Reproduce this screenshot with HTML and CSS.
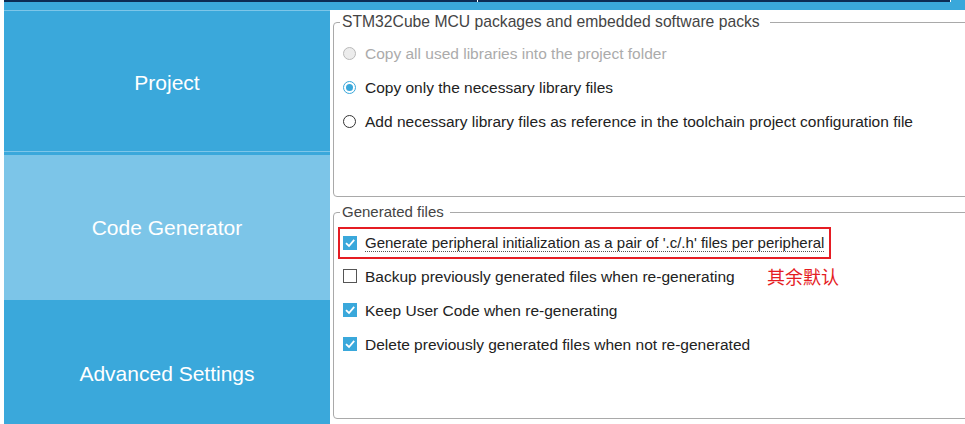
FILE: index.html
```html
<!DOCTYPE html>
<html>
<head>
<meta charset="utf-8">
<link rel="stylesheet" href="styles.css">
</head>
<body>
<div class="app">
  <div class="topbar">
    <div class="tabs"><span class="tab tab-a"></span><span class="tab tab-b"></span></div>
  </div>
  <div class="main">
    <nav class="sidebar">
      <div class="nav-item nav-first">Project</div>
      <div class="nav-item nav-active">Code Generator</div>
      <div class="nav-item nav-last">Advanced Settings</div>
    </nav>
    <section class="panel">
      <fieldset class="group group-packs">
        <legend class="legend-wide">STM32Cube MCU packages and embedded software packs</legend>
        <div class="row disabled"><span class="radio radio-disabled"></span><span class="label">Copy all used libraries into the project folder</span></div>
        <div class="row"><span class="radio radio-on"></span><span class="label">Copy only the necessary library files</span></div>
        <div class="row"><span class="radio"></span><span class="label">Add necessary library files as reference in the toolchain project configuration file</span></div>
      </fieldset>
      <fieldset class="group group-files">
        <legend>Generated files</legend>
        <div class="row row-marked"><span class="check check-on"><svg viewBox="0 0 14 14" width="14" height="14"><path d="M3 7.2 L6 10 L11.2 3.8" fill="none" stroke="#fff" stroke-width="1.8"/></svg></span><span class="label label-dotted">Generate peripheral initialization as a pair of '.c/.h' files per peripheral</span></div>
        <div class="row row-note"><span class="check"></span><span class="label">Backup previously generated files when re-generating</span><span class="note">其余默认</span></div>
        <div class="row"><span class="check check-on"><svg viewBox="0 0 14 14" width="14" height="14"><path d="M3 7.2 L6 10 L11.2 3.8" fill="none" stroke="#fff" stroke-width="1.8"/></svg></span><span class="label">Keep User Code when re-generating</span></div>
        <div class="row"><span class="check check-on"><svg viewBox="0 0 14 14" width="14" height="14"><path d="M3 7.2 L6 10 L11.2 3.8" fill="none" stroke="#fff" stroke-width="1.8"/></svg></span><span class="label">Delete previously generated files when not re-generated</span></div>
      </fieldset>
    </section>
  </div>
</div>
</body>
</html>
```
FILE: styles.css
```css
html, body {
  margin: 0;
  padding: 0;
  background: #fff;
  overflow: hidden;
}
.app {
  width: 961px;
  height: 424px;
  padding-left: 4px;
  overflow: hidden;
  font-family: "Liberation Sans", Arial, sans-serif;
}
.topbar {
  height: 10px;
  background: #3aa8db;
}
.tabs {
  display: flex;
  height: 2px;
}
.tab {
  display: block;
  height: 2px;
  background: #0c2c55;
  border-right: 1px solid #ffffff;
}
.tab-a { width: 473px; }
.tab-b { width: 472px; }
.main {
  display: flex;
  height: 414px;
}
.sidebar {
  width: 326px;
  flex: none;
  background: #3aa8db;
  display: flex;
  flex-direction: column;
}
.nav-item {
  flex: none;
  display: flex;
  align-items: center;
  justify-content: center;
  color: #fff;
  font-size: 21px;
  background: #3aa8db;
  box-sizing: border-box;
}
.nav-first {
  height: 142px;
  border-top: 1px solid #7dc6e9;
  border-bottom: 1px solid #7dc6e9;
  margin-bottom: 3px;
  padding-top: 4px;
}
.nav-active {
  background: #7cc5e8;
  height: 145px;
  padding-top: 1px;
}
.nav-last {
  height: 145px;
  padding-top: 2px;
}
.panel {
  flex: 1;
  min-width: 0;
  overflow: hidden;
  padding: 3px 0 0 3px;
}
.group {
  margin: 0;
  width: 700px;
  min-width: 0;
  border: 1px solid #a9a9a9;
  border-radius: 4px;
  padding: 5px 0 58px 6px;
  box-sizing: content-box;
}
.group-files {
  margin-top: 6px;
  padding-top: 4px;
  padding-bottom: 57px;
}
legend {
  padding: 0 6px 0 2px;
  font-size: 15px;
  line-height: 18px;
  color: #444;
}
.legend-wide {
  font-size: 15.7px;
  padding-right: 10px;
}
.row {
  height: 34px;
  display: flex;
  align-items: center;
  padding-left: 3px;
  font-size: 15.5px;
  color: #222;
}
.disabled { color: #ababab; }
.label { line-height: 17px; }
.radio {
  flex: none;
  width: 13px;
  height: 13px;
  box-sizing: border-box;
  border: 1px solid #333;
  border-radius: 50%;
  background: #fff;
  margin-right: 9px;
  display: flex;
  align-items: center;
  justify-content: center;
}
.radio-disabled {
  border-color: #b9b9b9;
  background: #ececec;
}
.radio-on {
  border-color: #3aa8db;
}
.radio-on::after {
  content: "";
  width: 7px;
  height: 7px;
  border-radius: 50%;
  background: #3aa8db;
}
.check {
  flex: none;
  width: 14px;
  height: 14px;
  box-sizing: border-box;
  border: 1px solid #555;
  background: #fff;
  margin-right: 8px;
}
.check-on {
  border: none;
  background: #3aa8db;
}
.check svg { display: block; }
.row-marked {
  align-self: flex-start;
  display: inline-flex;
  margin-left: -2px;
  margin-top: 2px;
  height: 32px;
  box-sizing: border-box;
  border: 2px solid #e51c23;
  padding: 0 5px 0 3px;
  width: fit-content;
  font-size: 15px;
}
.label-dotted {
  border-bottom: 1px dotted #555;
}
.row-note { position: relative; }
.note {
  position: absolute;
  left: 427px;
  top: 6px;
  font-family: "Noto Sans CJK SC", sans-serif;
  font-size: 18px;
  line-height: 22px;
  color: #e51c23;
}
```
